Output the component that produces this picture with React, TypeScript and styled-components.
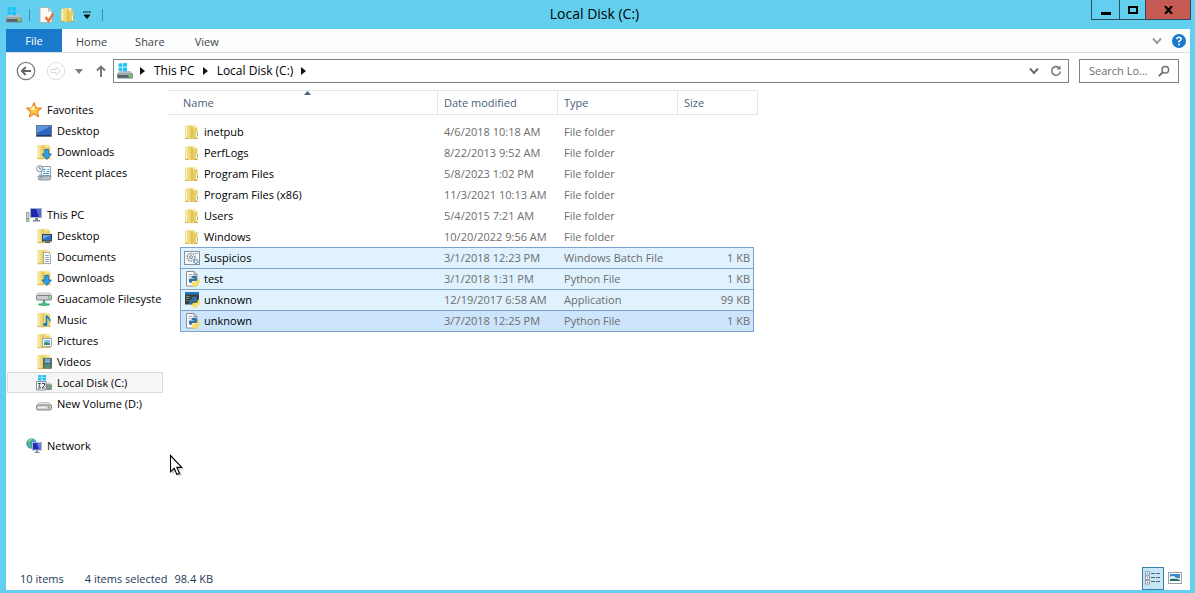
import React from "react";
import styled, { createGlobalStyle, css } from "styled-components";

const GlobalStyle = createGlobalStyle`
  *, *::before, *::after { box-sizing: border-box; }
  body {
    margin: 0;
    background: #62cfee;
    font-family: "Open Sans", "Liberation Sans", sans-serif;
    font-size: 11px;
    line-height: 16px;
    color: #000;
  }
  button, input { font: inherit; color: inherit; }
  button { border: 0; padding: 0; background: none; }
  a { color: inherit; text-decoration: none; }
  svg { display: block; flex: none; }
`;

/* ---------- layout ---------- */

const Frame = styled.div`
  min-height: 100vh;
  display: flex;
  flex-direction: column;
  padding: 0 5px 3px 6px;
  background: #62cfee;
`;

const TitleBar = styled.header`
  display: grid;
  grid-template-columns: 1fr auto 1fr;
  height: 29px;
  margin-right: -1px;
`;

const QuickAccess = styled.div`
  display: flex;
  align-items: center;
`;

const QuickButton = styled.button<{ $width?: number }>`
  display: flex;
  justify-content: center;
  width: ${(p) => p.$width ?? 22}px;
`;

const QuickDivider = styled.span`
  width: 1px;
  height: 12px;
  margin: 0 5px 0 7px;
  background: #3a8fb0;
`;

const Title = styled.h1`
  margin: 0;
  padding-right: 8px;
  font-size: 14px;
  font-weight: 400;
  line-height: 28px;
`;

const CaptionButtons = styled.div`
  display: flex;
  justify-content: flex-end;
  align-items: flex-start;
`;

const CaptionButton = styled.button<{ $width: number; $close?: boolean }>`
  display: flex;
  align-items: center;
  justify-content: center;
  width: ${(p) => p.$width}px;
  height: 20px;
  border: 1px solid #2b4f5e;
  border-top: 0;
  background: ${(p) => (p.$close ? "#c75a52" : "transparent")};
  & + & { border-left-width: 0; }
`;

const Client = styled.main`
  flex: 1;
  display: flex;
  flex-direction: column;
  background: #fff;
`;

const TabRow = styled.nav`
  display: flex;
  align-items: stretch;
  height: 24px;
  border-bottom: 1px solid #dadbdc;
  background: #fdfefe;
`;

const Tab = styled.button<{ $file?: boolean }>`
  min-width: 56px;
  padding: ${(p) => (p.$file ? "0" : "2px 14px 0")};
  background: ${(p) => (p.$file ? "#1979ca" : "transparent")};
  color: ${(p) => (p.$file ? "#fff" : "#444")};
`;

const TabTools = styled.div`
  display: flex;
  align-items: center;
  gap: 10px;
  margin-left: auto;
  padding-right: 4px;
`;

const NavRow = styled.div`
  display: flex;
  align-items: center;
  height: 36px;
  padding: 0 11px 0 10px;
`;

const NavButtons = styled.div`
  display: flex;
  align-items: center;
  width: 97px;
`;

const NavButton = styled.button<{ $gap: number }>`
  margin-right: ${(p) => p.$gap}px;
`;

const AddressBar = styled.div`
  flex: 1;
  display: flex;
  align-items: center;
  height: 24px;
  padding: 0 6px 0 3px;
  border: 1px solid #808285;
  font-size: 12px;
`;

const Crumb = styled.button`
  padding: 0 2px;
`;

const CrumbArrow = styled.span`
  display: flex;
  padding: 0 7px 0 6px;
  &:first-of-type { padding-left: 7px; }
`;

const AddressTools = styled.div`
  display: flex;
  align-items: center;
  gap: 11px;
  margin-left: auto;
`;

const SearchBox = styled.label`
  display: flex;
  align-items: center;
  width: 100px;
  height: 24px;
  margin-left: 10px;
  padding: 0 8px 0 9px;
  border: 1px solid #808285;
`;

const SearchInput = styled.input`
  flex: 1;
  min-width: 0;
  padding: 0;
  border: 0;
  outline: 0;
  background: transparent;
  &::placeholder { color: #6d6d6d; opacity: 1; }
`;

const Body = styled.div`
  flex: 1;
  display: flex;
`;

const Sidebar = styled.nav`
  width: 161px;
  padding: 10px 4px 0 1px;
`;

const Group = styled.ul`
  margin: 0 0 21px;
  padding: 0;
  list-style: none;
`;

const Place = styled.a<{ $level: number; $active?: boolean }>`
  display: flex;
  align-items: center;
  gap: 5px;
  height: 21px;
  padding-left: ${(p) => (p.$level === 0 ? 18 : 28)}px;
  border: 1px solid ${(p) => (p.$active ? "#dadada" : "transparent")};
  background: ${(p) => (p.$active ? "#f6f6f6" : "transparent")};
  white-space: nowrap;
`;

const Files = styled.section`
  flex: 1;
  min-width: 0;
  padding-top: 1px;
`;

const FileTable = styled.table`
  width: 591px;
  table-layout: fixed;
  border-collapse: separate;
  border-spacing: 0;
  tbody::before { content: ""; display: block; height: 6px; }
`;

const HeadCell = styled.th<{ $indent?: boolean }>`
  height: 25px;
  padding: 0 0 0 ${(p) => (p.$indent ? 16 : 6)}px;
  border: solid #e3e6e9;
  border-width: 1px 1px 1px 0;
  font-weight: 400;
  text-align: left;
  color: #4c607a;
`;

const HeadLabel = styled.span`
  position: relative;
  display: block;
`;

const SortMark = styled.svg`
  position: absolute;
  left: 121px;
  top: -4px;
`;

type Mark = "none" | "selected" | "focused";

const Cell = styled.td<{ $mark: Mark; $edge?: "left" | "right"; $last?: boolean }>`
  height: ${(p) => (p.$last ? 22 : 21)}px;
  padding: 0 0 0 6px;
  border: 0 solid #7da2ce;
  white-space: nowrap;
  color: #6d6d6d;
  ${(p) => p.$mark !== "none" && css`
    border-top-width: 1px;
    background: ${p.$mark === "focused" ? "#cce4fc" : "#dff2fd"};
  `}
  ${(p) => p.$mark !== "none" && p.$edge === "left" && css`border-left-width: 1px;`}
  ${(p) => p.$mark !== "none" && p.$edge === "right" && css`border-right-width: 1px;`}
  ${(p) => p.$last && css`border-bottom-width: 1px;`}
  ${(p) => p.$edge === "left" && css`color: #000; padding-left: ${p.$mark === "none" ? 4 : 3}px;`}
  ${(p) => p.$edge === "right" && css`text-align: right; padding-right: 3px;`}
`;

const Blank = styled.td`
  padding: 0;
`;

const FileName = styled.span`
  display: flex;
  align-items: center;
  gap: 4px;
`;

const StatusBar = styled.footer`
  display: flex;
  align-items: center;
  height: 24px;
  padding: 0 4px 0 14px;
  color: #1e395b;
`;

const StatusText = styled.span<{ $gap: number }>`
  margin-right: ${(p) => p.$gap}px;
  padding-top: 2px;
`;

const ViewButtons = styled.div`
  display: flex;
  margin-left: auto;
`;

const ViewButton = styled.button<{ $active?: boolean }>`
  display: flex;
  align-items: center;
  justify-content: center;
  width: 22px;
  height: 23px;
  border: 1px solid ${(p) => (p.$active ? "#3e7fa8" : "transparent")};
  background: ${(p) => (p.$active ? "#c4e6f7" : "transparent")};
`;

const Pointer = styled.svg`
  position: absolute;
  left: 169px;
  top: 454px;
`;

/* ---------- icons ---------- */

const Svg = ({ children }: { children: React.ReactNode }) => (
  <svg width="16" height="16" viewBox="0 0 16 16" aria-hidden="true">{children}</svg>
);

const WindowsLogo = () => (
  <g fill="#1cc4f5">
    <path d="M1.500 .5l3.500-.3V3.800H1.500zM5.700.2L10 0v3.800H5.700zM1.500 4.500H5V8l-3.500-.4zM5.700 4.500H10v3.900l-4.300-.5z" />
  </g>
);

const SystemDrive = () => (
  <Svg>
    <path d="M2.500 8h11L16 11H0z" fill="#b9c0c4" />
    <WindowsLogo />
    <rect x="0" y="10.500" width="16" height="5" rx="1" fill="#7c8890" />
    <rect x="1" y="11.500" width="11" height="3" fill="#55616a" />
    <path d="M1 11.500h11" stroke="#a5b0b6" />
    <rect x="11.500" y="11.500" width="3.500" height="2.500" fill="#7fd04c" />
  </Svg>
);

const SidebarDrive = () => (
  <Svg>
    <path d="M2 .2L5.600 0V2.400H2zM6.400 0H10v2.400H6.400zM2 3.100h3.600V5.500H2zM6.400 3.100H10V5.500H6.400z" fill="#1cc4f5" />
    <rect x="8" y="9" width="8" height="6" rx="1" fill="#858d92" />
    <path d="M9 9l1-1.500h4.500L16 9.500z" fill="#cbd0d3" />
    <rect x="12" y="10.500" width="2.500" height="3" fill="#6ea870" />
    <path d="M.5 6.500h9.500v8.500h-9.500z" fill="#eef3f5" stroke="#879299" />
    <path d="M2 8.500h2.500l-1.500 2 1.500 2.500H2M6 8.500h2.500v2L6 13h2.500" fill="none" stroke="#3d4a51" />
  </Svg>
);

const FolderBase = () => (
  <>
    <path d="M1.500 1.500L7 .8V14.500l-5.500.5z" fill="#efdc7d" />
    <path d="M7 .8h5.500L14 2v12.800H7z" fill="#f6e99c" />
    <path d="M9.500 3h4.800v11.800H9.500z" fill="#e9d068" />
    <path d="M4.500 2.200L9.500.8v14l-3.300.9-1.700-1z" fill="#f0da7a" />
    <path d="M7.200 2v13" stroke="#dfb65a" strokeWidth="1.300" />
    <path d="M3 2.500v11" stroke="#faf2bd" />
    <path d="M1.500 14.800l5-.2M9.500 14.600h5" stroke="#cfae4d" strokeWidth=".8" />
  </>
);

const Folder = () => (
  <Svg>
    <path d="M1 2L7 .8V14.500L1 14z" fill="#f0de84" />
    <path d="M7 1.500L11.500.5V13H7z" fill="#f7eca8" />
    <path d="M9 4l4.500-1v11.500L9 14z" fill="#e8cf62" />
    <path d="M4.500 3L8.500 1.200v14L4.500 14.500z" fill="#efd672" />
    <path d="M8 2.500V15" stroke="#dcb04c" strokeWidth="1.400" />
    <path d="M2.500 2.500v11" stroke="#faf3c4" strokeWidth="1.200" />
    <path d="M12.500 8.500v4.500" stroke="#fdfbe8" />
    <path d="M13.500 9v3" stroke="#7bb6a0" />
    <path d="M1 14.300l3.500.3M9.500 14.500h4" stroke="#c9a441" strokeWidth=".9" />
  </Svg>
);

const DownloadsIcon = () => (
  <Svg>
    <FolderBase />
    <path d="M8.700 5.500h4V10h2.800l-4.800 5.500L6 10h2.700z" fill="#2f9fe0" stroke="#1467ab" strokeWidth=".8" />
  </Svg>
);

const DesktopFolder = () => (
  <Svg>
    <FolderBase />
    <rect x="6.500" y="6.500" width="9" height="6.500" fill="#2f6fc0" stroke="#2a405e" />
    <path d="M7 7h8l-8 4z" fill="#69a6e5" />
    <path d="M9 14.500h5" stroke="#4b5a68" />
  </Svg>
);

const DocumentsFolder = () => (
  <Svg>
    <FolderBase />
    <path d="M7.500 3.500h5l2 2v9h-7z" fill="#fff" stroke="#8c9aa6" strokeWidth=".8" />
    <path d="M9 6.500h4M9 8.500h4M9 10.500h4M9 12.500h4" stroke="#6c92bb" strokeWidth=".8" />
  </Svg>
);

const MusicFolder = () => (
  <Svg>
    <FolderBase />
    <path d="M10.500 12V3.500c.5 2.300 3.800 2.500 3.500 6" fill="none" stroke="#1580c6" strokeWidth="1.500" />
    <ellipse cx="9.200" cy="12.500" rx="2.200" ry="1.800" fill="#1580c6" />
  </Svg>
);

const PicturesFolder = () => (
  <Svg>
    <FolderBase />
    <rect x="6.500" y="5.500" width="9" height="8" fill="#f7fafc" stroke="#8b99a4" strokeWidth=".8" />
    <rect x="8" y="7" width="6" height="5" fill="#7cc4e8" />
    <path d="M8 12v-2l2-1 4 1.500V12z" fill="#3f8b62" />
  </Svg>
);

const VideosFolder = () => (
  <Svg>
    <FolderBase />
    <rect x="7" y="4" width="9" height="10.500" fill="#39434b" />
    <rect x="9" y="4.500" width="5" height="4.500" fill="#6db2d6" />
    <rect x="9" y="9.700" width="5" height="4.300" fill="#55926c" />
    <path d="M8 4.500v10M15 4.500v10" stroke="#dde3e6" strokeDasharray="1 1" />
  </Svg>
);

const StarIcon = () => (
  <Svg>
    <path d="M8 .8l2.100 4.900 5.300.4-4 3.500 1.300 5.300L8 12l-4.700 2.900 1.300-5.300-4-3.500 5.300-.4z" fill="#fbc642" stroke="#e0812a" strokeWidth="1.100" strokeLinejoin="round" />
    <path d="M8 3.300l1.200 3.200L8 8.500 4 7z" fill="#fff0a8" />
  </Svg>
);

const DesktopIcon = () => (
  <Svg>
    <rect x=".5" y="2.500" width="15" height="11" fill="#2b65bd" stroke="#66778b" />
    <path d="M1 3h14L1 10z" fill="#5c93de" />
    <path d="M1 12.500h14" stroke="#1c3a66" />
  </Svg>
);

const RecentIcon = () => (
  <Svg>
    <path d="M5.500 1.500h9v9h-9z" fill="#f5f9fc" stroke="#8aa3b7" />
    <path d="M7 4.500h3M11.500 4.500H13M7 6.500h2M10.500 6.500H13M7 8.500h6" stroke="#4ba3d4" />
    <path d="M2 11h13l-1 4H3z" fill="#b9c2c9" stroke="#7f8b94" strokeWidth=".8" />
    <circle cx="3.700" cy="3.700" r="3.100" fill="#f1f3f4" stroke="#8b949b" />
    <path d="M3.700 1.800v2h1.600" fill="none" stroke="#4d565c" strokeWidth=".8" />
    <path d="M4 9v3h3" fill="none" stroke="#7f8b94" />
  </Svg>
);

const ComputerIcon = () => (
  <Svg>
    <rect x=".5" y="5.500" width="2.500" height="9" fill="#d1d6da" stroke="#8b949a" strokeWidth=".8" />
    <rect x="1" y="11" width="1.500" height="2" fill="#62b64a" />
    <rect x="4.500" y="1.500" width="11" height="9" fill="#1b25ad" stroke="#aab3c3" />
    <path d="M10 2h5v8h-2z" fill="#5967dc" />
    <path d="M9 11h3v2h2v1.500H7V13h2z" fill="#7f8a96" />
  </Svg>
);

const NetDriveIcon = () => (
  <Svg>
    <path d="M2 2h12l2 3H0z" fill="#dde0e2" stroke="#9aa0a4" strokeWidth=".5" />
    <rect x=".5" y="4.500" width="15" height="4.500" rx="1" fill="#c9cdd0" stroke="#6f777c" strokeWidth=".9" />
    <rect x="12" y="5.500" width="2" height="2" fill="#54c452" />
    <path d="M8 9v4" stroke="#35a76c" strokeWidth="2" />
    <path d="M2.500 13.500h11" stroke="#35a76c" strokeWidth="2" />
    <rect x="5.500" y="11.500" width="5" height="3.500" fill="#46bd81" />
  </Svg>
);

const VolumeIcon = () => (
  <Svg>
    <path d="M3 6.500h10l3 3.500H0z" fill="#e2e3e4" stroke="#a8abad" strokeWidth=".6" />
    <rect x=".5" y="9" width="15" height="5" rx="1.500" fill="#cfd1d2" stroke="#74787a" strokeWidth=".9" />
    <path d="M2 11.500h8" stroke="#f4f5f5" />
    <rect x="12" y="10.500" width="1.500" height="2" fill="#8fa33b" />
  </Svg>
);

const NetworkIcon = () => (
  <Svg>
    <circle cx="5.500" cy="5.500" r="5.200" fill="#3f9bd4" />
    <path d="M2 2.500c2-2.500 4-2 5-1.500C7 3.500 4 3 4 5.500s2 2 1.500 4.500C2 9 1 5.500 2 2.500z" fill="#58bd58" />
    <path d="M2.500 3l3-2" stroke="#c9f0dd" />
    <rect x="6.500" y="4.500" width="9" height="7.500" fill="#1e2fb4" stroke="#aab6c9" />
    <path d="M11 5h4v6.500h-2z" fill="#6a7de0" />
    <path d="M10 12.500h2v1.500h1.500v1H8.500v-1H10z" fill="#7f8a96" />
  </Svg>
);

const BatchIcon = () => (
  <Svg>
    <rect x=".5" y="1.500" width="15" height="13" fill="#f6f8f9" stroke="#8494a0" />
    <circle cx="7" cy="7.200" r="3.800" fill="none" stroke="#84909a" strokeWidth="1.500" strokeDasharray="1.500 .9" />
    <circle cx="7" cy="7.200" r="1.500" fill="none" stroke="#72808a" />
    <circle cx="12" cy="11.500" r="2" fill="#e1f0fa" stroke="#5285ae" strokeWidth="1.300" strokeDasharray="1.400 .7" />
    <path d="M11 3.500h3" stroke="#9fadb7" />
  </Svg>
);

const PythonMark = () => (
  <>
    <path d="M7.500 6.500Q7.500 4.500 10 4.500h.5Q13 4.500 13 6.500V8.500q0 1.500-1.500 1.500H9Q7.500 10 7.500 12H6.500Q4.800 11.500 4.800 9.500T6.500 7.500h3.500V7H7.500z" fill="#35719f" />
    <path d="M13.800 7.500h.7q1.500.6 1.500 2.800t-1.500 2.600H11.500v.5H14q0 2.400-2.700 2.400T8.300 13.800v-1.800q0-1.200 1.400-1.200h2.500Q13.800 10.800 13.800 9z" fill="#f9de5a" />
  </>
);

const PythonFileIcon = () => (
  <Svg>
    <path d="M2.500.5h7.500l3 3v11.500H2.500z" fill="#fdfdfd" stroke="#8a9097" />
    <path d="M10 .5v3h3" fill="none" stroke="#8a9097" />
    <path d="M4.500 3.500h4M4.500 5.500h3M4.500 7.500h1" stroke="#9fa8b0" />
    <PythonMark />
  </Svg>
);

const PythonAppIcon = () => (
  <Svg>
    <rect x="1" y="0" width="14" height="12.500" fill="#3c4044" />
    <rect x="1" y="0" width="14" height="2.500" fill="#2376b4" />
    <path d="M2 4.500h4M2 6.500h3M2 8.500h2" stroke="#5b9a58" />
    <PythonMark />
  </Svg>
);

const PropertiesIcon = () => (
  <Svg>
    <path d="M2 .5h8.500L14 4v11.500H2z" fill="#fbfaf8" stroke="#a5a9aa" strokeWidth=".8" />
    <path d="M10.500.5V4H14" fill="#dfe2e3" stroke="#a5a9aa" strokeWidth=".8" />
    <path d="M7.500 10l3 4 5-7.500" fill="none" stroke="#ea7440" strokeWidth="2.500" />
  </Svg>
);

const CrumbTriangle = () => (
  <svg width="5" height="8" viewBox="0 0 5 8" aria-hidden="true"><path d="M0 0l5 4-5 4z" fill="#111" /></svg>
);

const ChevronDown = ({ color }: { color: string }) => (
  <svg width="10" height="8" viewBox="0 0 10 8" aria-hidden="true">
    <path d="M1 1.500L5 6l4-4.500" fill="none" stroke={color} strokeWidth="1.900" />
  </svg>
);

/* ---------- data ---------- */

type PlaceItem = { label: string; icon: React.ReactNode; active?: boolean };

const places: { head: PlaceItem; items: PlaceItem[] }[] = [
  {
    head: { label: "Favorites", icon: <StarIcon /> },
    items: [
      { label: "Desktop", icon: <DesktopIcon /> },
      { label: "Downloads", icon: <DownloadsIcon /> },
      { label: "Recent places", icon: <RecentIcon /> },
    ],
  },
  {
    head: { label: "This PC", icon: <ComputerIcon /> },
    items: [
      { label: "Desktop", icon: <DesktopFolder /> },
      { label: "Documents", icon: <DocumentsFolder /> },
      { label: "Downloads", icon: <DownloadsIcon /> },
      { label: "Guacamole Filesyste", icon: <NetDriveIcon /> },
      { label: "Music", icon: <MusicFolder /> },
      { label: "Pictures", icon: <PicturesFolder /> },
      { label: "Videos", icon: <VideosFolder /> },
      { label: "Local Disk (C:)", icon: <SidebarDrive />, active: true },
      { label: "New Volume (D:)", icon: <VolumeIcon /> },
    ],
  },
  { head: { label: "Network", icon: <NetworkIcon /> }, items: [] },
];

type FileRow = { name: string; date: string; type: string; size?: string; icon: React.ReactNode; mark?: Mark };

const files: FileRow[] = [
  { name: "inetpub", date: "4/6/2018 10:18 AM", type: "File folder", icon: <Folder /> },
  { name: "PerfLogs", date: "8/22/2013 9:52 AM", type: "File folder", icon: <Folder /> },
  { name: "Program Files", date: "5/8/2023 1:02 PM", type: "File folder", icon: <Folder /> },
  { name: "Program Files (x86)", date: "11/3/2021 10:13 AM", type: "File folder", icon: <Folder /> },
  { name: "Users", date: "5/4/2015 7:21 AM", type: "File folder", icon: <Folder /> },
  { name: "Windows", date: "10/20/2022 9:56 AM", type: "File folder", icon: <Folder /> },
  { name: "Suspicios", date: "3/1/2018 12:23 PM", type: "Windows Batch File", size: "1 KB", icon: <BatchIcon />, mark: "selected" },
  { name: "test", date: "3/1/2018 1:31 PM", type: "Python File", size: "1 KB", icon: <PythonFileIcon />, mark: "selected" },
  { name: "unknown", date: "12/19/2017 6:58 AM", type: "Application", size: "99 KB", icon: <PythonAppIcon />, mark: "selected" },
  { name: "unknown", date: "3/7/2018 12:25 PM", type: "Python File", size: "1 KB", icon: <PythonFileIcon />, mark: "focused" },
];

/* ---------- window ---------- */

export default function App() {
  return (
    <Frame>
      <GlobalStyle />
      <TitleBar>
        <QuickAccess>
          <SystemDrive />
          <QuickDivider />
          <QuickButton aria-label="Properties"><PropertiesIcon /></QuickButton>
          <QuickButton aria-label="New folder"><Folder /></QuickButton>
          <QuickButton $width={16} aria-label="Customize toolbar">
            <svg width="8" height="8" viewBox="0 0 8 8"><path d="M0 1h8M1 4h6l-3 3.500z" stroke="#000" strokeWidth=".8" /></svg>
          </QuickButton>
          <QuickDivider />
        </QuickAccess>
        <Title>Local Disk (C:)</Title>
        <CaptionButtons>
          <CaptionButton $width={29} aria-label="Minimize">
            <svg width="10" height="10" viewBox="0 0 10 10"><path d="M0 7h10v3H0z" /></svg>
          </CaptionButton>
          <CaptionButton $width={26} aria-label="Maximize">
            <svg width="10" height="8" viewBox="0 0 10 8"><path d="M1 1h8v6H1z" fill="none" stroke="#000" strokeWidth="2" /></svg>
          </CaptionButton>
          <CaptionButton $width={45} $close aria-label="Close">
            <svg width="9" height="8" viewBox="0 0 9 8"><path d="M1 0l7 8M8 0L1 8" stroke="#000" strokeWidth="2.200" /></svg>
          </CaptionButton>
        </CaptionButtons>
      </TitleBar>

      <Client>
        <TabRow aria-label="Ribbon">
          <Tab $file>File</Tab>
          <Tab>Home</Tab>
          <Tab>Share</Tab>
          <Tab>View</Tab>
          <TabTools>
            <button aria-label="Expand ribbon"><ChevronDown color="#9a9a9a" /></button>
            <button aria-label="Help">
              <svg width="14" height="14" viewBox="0 0 14 14">
                <circle cx="7" cy="7" r="7" fill="#1979ca" />
                <path d="M4.800 5.200Q4.800 3.200 7 3.200t2.200 1.900Q9.200 6.400 7 7.200v1.400" fill="none" stroke="#fff" strokeWidth="1.500" />
                <rect x="6.200" y="9.700" width="1.600" height="1.600" fill="#fff" />
              </svg>
            </button>
          </TabTools>
        </TabRow>

        <NavRow>
          <NavButtons>
            <NavButton $gap={10} aria-label="Back">
              <svg width="20" height="20" viewBox="0 0 20 20">
                <circle cx="10" cy="10" r="8.700" fill="#fff" stroke="#7b7d80" strokeWidth="1.300" />
                <path d="M15 10H6M9.800 6L5.800 10l4 4" fill="none" stroke="#626467" strokeWidth="1.800" />
              </svg>
            </NavButton>
            <NavButton $gap={9} aria-label="Forward">
              <svg width="20" height="20" viewBox="0 0 20 20">
                <circle cx="10" cy="10" r="8.700" fill="#fff" stroke="#dcdddf" />
                <path d="M5 8.500h5V6l4.500 4-4.500 4v-2.500H5z" fill="none" stroke="#d8d9db" />
              </svg>
            </NavButton>
            <NavButton $gap={13} aria-label="Recent locations">
              <svg width="8" height="5" viewBox="0 0 8 5"><path d="M0 0h8L4 5z" fill="#7d7f82" /></svg>
            </NavButton>
            <NavButton $gap={0} aria-label="Up">
              <svg width="10" height="12" viewBox="0 0 10 12"><path d="M5 12V2M1 5.500L5 1.500l4 4" fill="none" stroke="#727477" strokeWidth="1.900" /></svg>
            </NavButton>
          </NavButtons>
          <AddressBar>
            <SystemDrive />
            <CrumbArrow><CrumbTriangle /></CrumbArrow>
            <Crumb>This PC</Crumb>
            <CrumbArrow><CrumbTriangle /></CrumbArrow>
            <Crumb>Local Disk (C:)</Crumb>
            <CrumbArrow><CrumbTriangle /></CrumbArrow>
            <AddressTools>
              <button aria-label="Previous locations"><ChevronDown color="#6a6c6f" /></button>
              <button aria-label="Refresh">
                <svg width="12" height="12" viewBox="0 0 12 12">
                  <path d="M9 2.800A4.300 4.300 0 1 0 10.300 6.500" fill="none" stroke="#77797c" strokeWidth="1.600" />
                  <path d="M6.500 4.500h4V.5z" fill="#77797c" />
                </svg>
              </button>
            </AddressTools>
          </AddressBar>
          <SearchBox>
            <SearchInput aria-label="Search" placeholder="Search Lo..." />
            <svg width="12" height="12" viewBox="0 0 12 12" aria-hidden="true">
              <circle cx="7.300" cy="4.700" r="3.300" fill="none" stroke="#6d6f72" strokeWidth="1.500" />
              <path d="M5 7L.8 11.200" stroke="#6d6f72" strokeWidth="1.900" />
            </svg>
          </SearchBox>
        </NavRow>

        <Body>
          <Sidebar aria-label="Places">
            {places.map(({ head, items }) => (
              <Group key={head.label}>
                <li><Place href="#" $level={0}>{head.icon}{head.label}</Place></li>
                {items.map((item) => (
                  <li key={item.label}>
                    <Place href="#" $level={1} $active={item.active}>{item.icon}{item.label}</Place>
                  </li>
                ))}
              </Group>
            ))}
          </Sidebar>

          <Files>
            <FileTable>
              <colgroup>
                <col style={{ width: 13 }} />
                <col style={{ width: 258 }} />
                <col style={{ width: 120 }} />
                <col style={{ width: 120 }} />
                <col style={{ width: 76 }} />
                <col style={{ width: 4 }} />
              </colgroup>
              <thead>
                <tr>
                  <HeadCell colSpan={2} $indent>
                    <HeadLabel>
                      Name
                      <SortMark width="7" height="4" viewBox="0 0 7 4" aria-hidden="true">
                        <path d="M0 4l3.500-4L7 4z" fill="#4c607a" />
                      </SortMark>
                    </HeadLabel>
                  </HeadCell>
                  <HeadCell>Date modified</HeadCell>
                  <HeadCell>Type</HeadCell>
                  <HeadCell colSpan={2}>Size</HeadCell>
                </tr>
              </thead>
              <tbody>
                {files.map((f, i) => {
                  const mark = f.mark ?? "none";
                  const last = mark !== "none" && i === files.length - 1;
                  return (
                    <tr key={f.name + f.type}>
                      <Blank />
                      <Cell $mark={mark} $edge="left" $last={last}><FileName>{f.icon}{f.name}</FileName></Cell>
                      <Cell $mark={mark} $last={last}>{f.date}</Cell>
                      <Cell $mark={mark} $last={last}>{f.type}</Cell>
                      <Cell $mark={mark} $edge="right" $last={last}>{f.size}</Cell>
                      <Blank />
                    </tr>
                  );
                })}
              </tbody>
            </FileTable>
          </Files>
        </Body>

        <StatusBar>
          <StatusText $gap={21}>10 items</StatusText>
          <StatusText $gap={7}>4 items selected</StatusText>
          <StatusText $gap={0}>98.4 KB</StatusText>
          <ViewButtons>
            <ViewButton $active aria-label="Details view">
              <svg width="16" height="14" viewBox="0 0 16 14">
                <g fill="#fff" stroke="#7f8d99" strokeWidth=".8">
                  <rect x=".5" y=".5" width="4" height="3.500" /><rect x=".5" y="5" width="4" height="3.500" /><rect x=".5" y="9.500" width="4" height="3.500" />
                </g>
                <path d="M2 2.300h1.200M2 11.300h1.200" stroke="#3b5f8a" />
                <path d="M2 6.800h1.200" stroke="#c03a4a" />
                <path d="M6 2.500h4M11 2.500h4M6 6.500h4M11 6.500h4M6 10.500h4M11 10.500h4" stroke="#4a6374" />
              </svg>
            </ViewButton>
            <ViewButton aria-label="Large icons view">
              <svg width="14" height="12" viewBox="0 0 14 12">
                <rect x=".5" y=".5" width="13" height="11" fill="#fff" stroke="#9aa2a9" />
                <rect x="2" y="2" width="10" height="7" fill="#3d8ad0" />
                <path d="M2 5q3-2 5 0t5 1v3H2z" fill="#e8f2f4" />
                <path d="M2 7q5-1 10 1v1H2z" fill="#256a55" />
              </svg>
            </ViewButton>
          </ViewButtons>
        </StatusBar>
      </Client>

      <Pointer width="16" height="24" viewBox="0 0 16 24" aria-hidden="true">
        <path d="M3 3v17l4-3.500 3 6 3-1.500-3-5.500h5z" fill="#000" opacity=".22" />
        <path d="M1.500 1.500v16.300l3.700-3.500 2.700 6.200 2.600-1.200-2.700-5.900h5z" fill="#fff" stroke="#000" strokeWidth="1.100" />
      </Pointer>
    </Frame>
  );
}
